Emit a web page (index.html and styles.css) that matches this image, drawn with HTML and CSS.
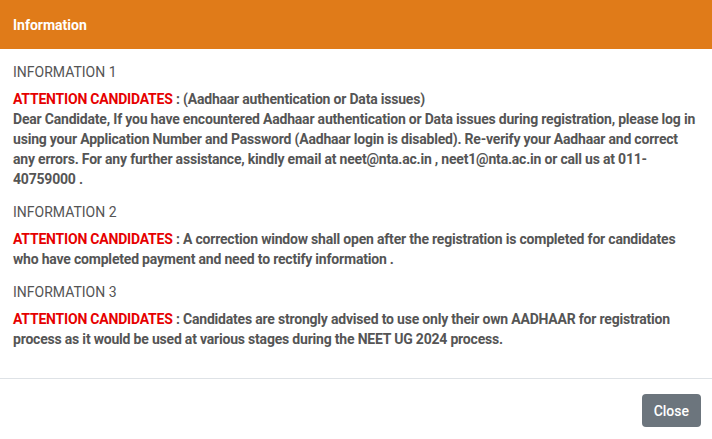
FILE: index.html
```html
<!DOCTYPE html>
<html lang="en">
<head>
    <meta charset="utf-8"/>
    <title>Information</title>
    <link rel="stylesheet" href="styles.css">
</head>
<body>
<div class="modal">
    <div class="modal-header">
        <h5>Information</h5>
    </div>
    <div class="modal-body">
        <h6>INFORMATION 1</h6>
        <p><span class="alert">ATTENTION CANDIDATES</span> : (Aadhaar authentication or Data issues)<br>
            Dear Candidate, If you have encountered Aadhaar authentication or Data issues during registration, please log in using your Application Number and Password (Aadhaar login is disabled). Re-verify your Aadhaar and correct any errors. For any further assistance, kindly email at neet@nta.ac.in , neet1@nta.ac.in or call us at 011-40759000 .</p>

        <h6>INFORMATION 2</h6>
        <p><span class="alert">ATTENTION CANDIDATES</span> : A correction window shall open after the registration is completed for candidates who have completed payment and need to rectify information .</p>

        <h6>INFORMATION 3</h6>
        <p><span class="alert">ATTENTION CANDIDATES</span> : Candidates are strongly advised to use only their own AADHAAR for registration process as it would be used at various stages during the NEET UG 2024 process.</p>
    </div>
    <div class="modal-footer">
        <button type="button">Close</button>
    </div>
</div>
</body>
</html>
```

FILE: styles.css
```css
body {
    margin: 0;
    font-family: Roboto, "Liberation Sans", sans-serif;
    background: white;
}

.modal-header {
    background: #e07b19;
    height: 49px;
    display: flex;
    align-items: center;
    padding: 0 13px;
}

.modal-header h5 {
    margin: 0;
    color: white;
    font-size: 14px;
    font-weight: bold;
}

.modal-body {
    padding: 13px 11px 16px 13px;
}

.modal-body h6 {
    margin: 0 0 7px;
    font-size: 14px;
    font-weight: normal;
    line-height: 20px;
    color: #555;
}

.modal-body p {
    margin: 0 0 13px;
    font-size: 14px;
    font-weight: bold;
    line-height: 20px;
    letter-spacing: -0.2px;
    color: #555;
}

.alert {
    color: #e60000;
}

.modal-footer {
    border-top: 1px solid #dee2e6;
    display: flex;
    justify-content: flex-end;
    padding: 15px 11px 12px;
}

.modal-footer button {
    background: #6c757d;
    color: white;
    border: none;
    border-radius: 4px;
    height: 33px;
    padding: 0 12px;
    font-family: Roboto, "Liberation Sans", sans-serif;
    font-size: 14px;
    font-weight: 500;
}
```
